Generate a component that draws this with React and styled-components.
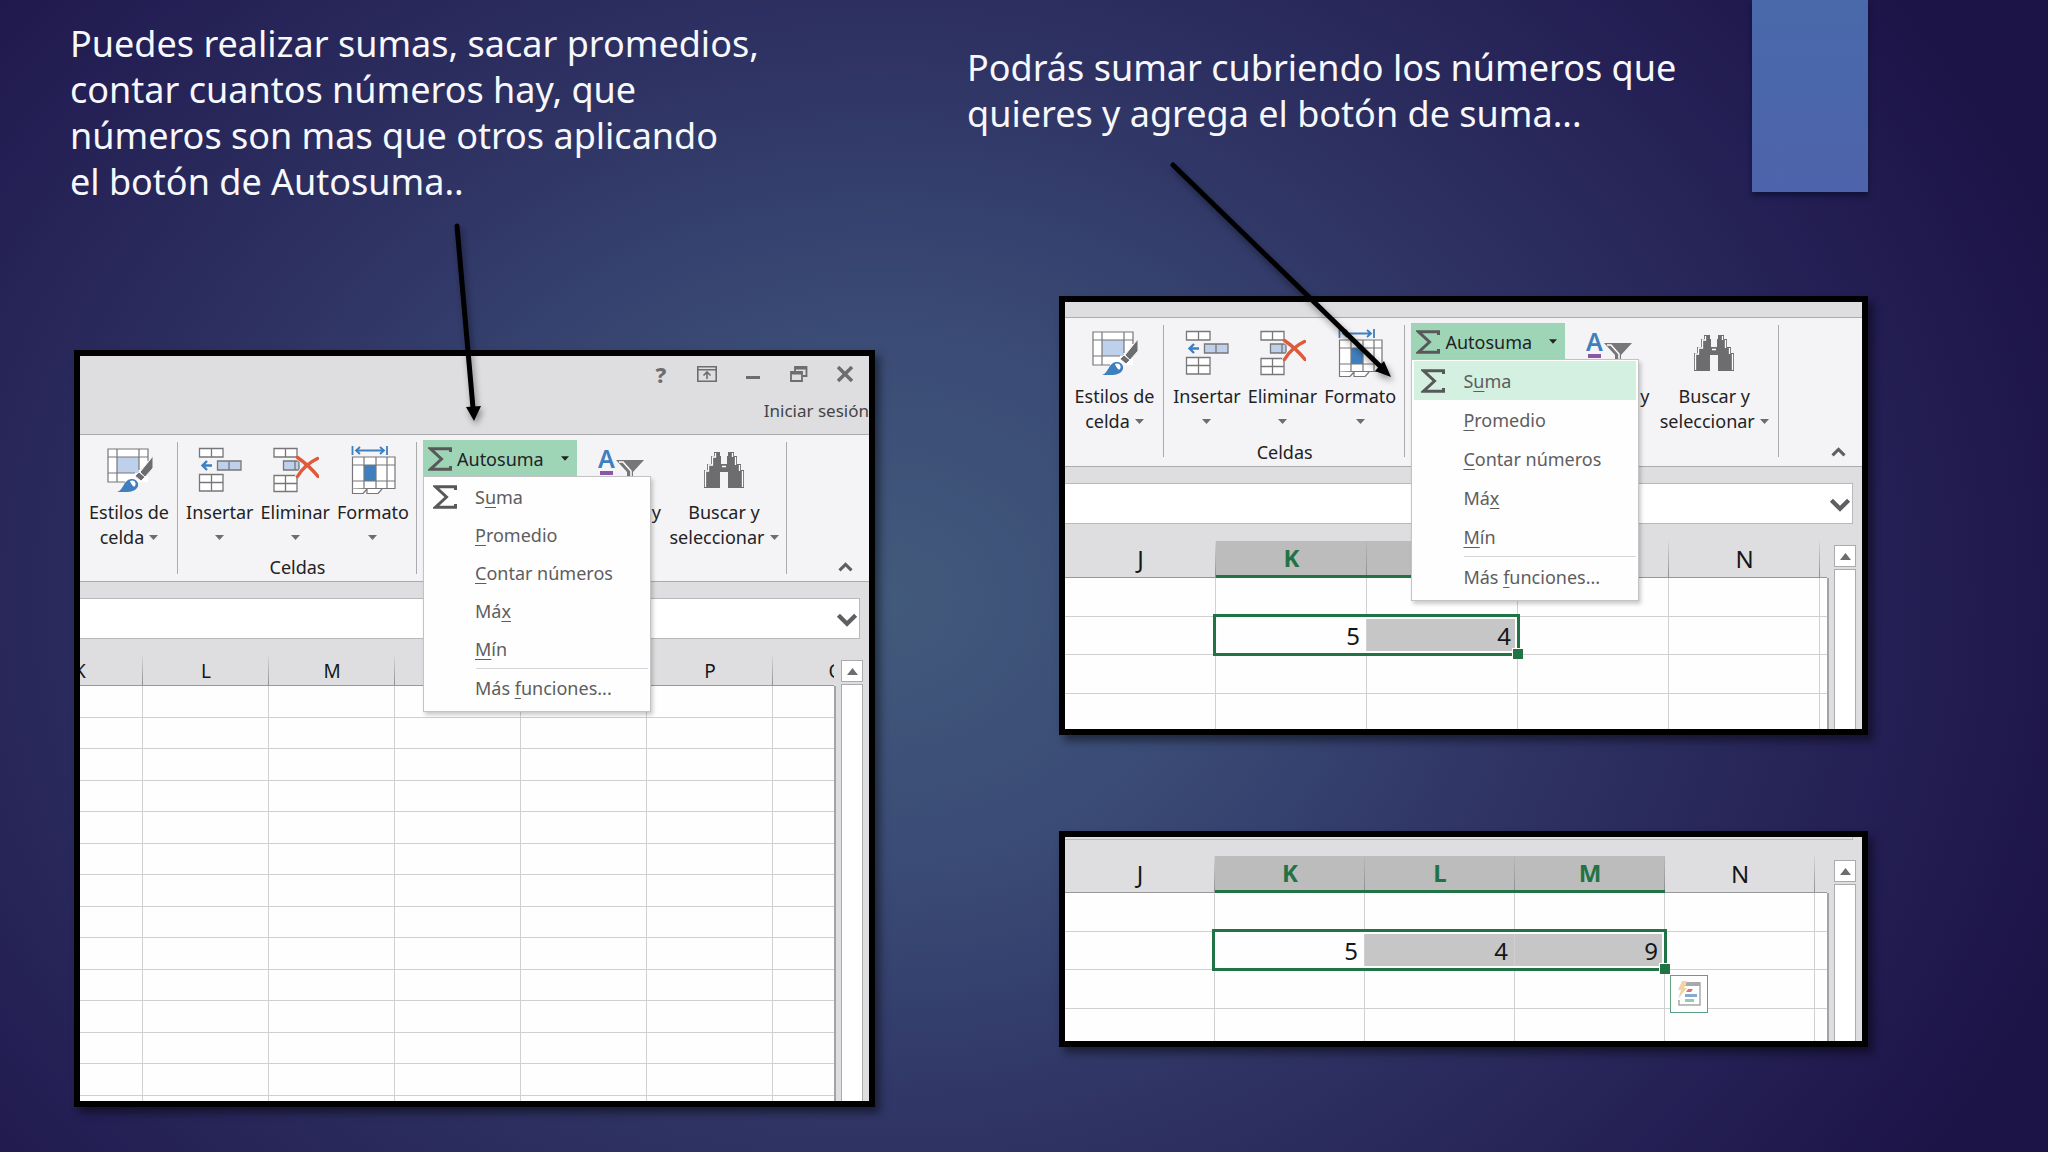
import React from 'react';
import styled, { createGlobalStyle, css } from 'styled-components';

const colors = {
  frame: '#000000',
  chrome: '#dedee0',
  ribbon: '#f4f4f6',
  line: '#ababad',
  gridLine: '#d0d0d3',
  icon: '#6d6d70',
  text: '#222224',
  menuText: '#5d5d60',
  green: '#217346',
  greenActive: '#9fd5b7',
  greenHover: '#d3f0e1',
  selected: '#bdbcbd',
  selectedCell: '#c6c6c6',
  blue: '#3f7fbf',
  paleBlue: '#bfd1ea',
};

const GlobalStyle = createGlobalStyle`
  * {
    box-sizing: border-box;
  }
  body {
    margin: 0;
    background: #1c1346;
    font-family: 'Noto Sans', 'Open Sans', sans-serif;
  }
  button, input {
    font: inherit;
    color: inherit;
    margin: 0;
    padding: 0;
    border: none;
    background: none;
  }
`;

/* ---------- icons ---------- */

function SigmaIcon() {
  return (
    <svg width="24" height="24" viewBox="0 0 24 24" aria-hidden="true">
      <path
        d="M22.500 5V1.800H2.500L13.500 12L2.500 22.200H22.500V19"
        fill="none"
        stroke="#58585a"
        strokeWidth="3"
      />
    </svg>
  );
}

function StylesIcon() {
  return (
    <svg width="48" height="48" viewBox="0 0 48 48" aria-hidden="true">
      <rect x="3" y="3" width="40" height="33" fill="#fff" />
      <rect x="12" y="11" width="22" height="16" fill={colors.paleBlue} />
      <path
        d="M43 15V3H3V36H20M12 3V36M34 3V24M3 11H43M3 27H30"
        fill="none"
        stroke="#77777a"
        strokeWidth="1.2"
      />
      <path d="M48 10V22L40 31L35 26Z" fill={colors.icon} stroke="#f4f4f6" />
      <path d="M34 26L40 31L36 35L30 30Z" fill={colors.icon} stroke="#f4f4f6" />
      <path
        d="M12 46C19 44 18 34 26 33C32 32 35 38 32 42C28 47 20 46 12 46Z"
        fill={colors.blue}
      />
      <path d="M25 35C29 33 32 37 30 40C29 42 26 38 25 35Z" fill="#fff" />
    </svg>
  );
}

function InsertIcon() {
  return (
    <svg width="48" height="48" viewBox="0 0 48 48" aria-hidden="true">
      <g fill="#fff" stroke="#77777a" strokeWidth="1.3">
        <path d="M3.500 2.500H27V11H3.500ZM15.500 2.500V11" />
        <path d="M3.500 28.500H27V45H3.500ZM15.500 28.500V45M3.500 36.500H27" />
        <path d="M21.500 15H45V24H21.500ZM33 15V24" fill={colors.paleBlue} />
      </g>
      <path
        d="M16 19.500H7M11 15L6.500 19.500L11 24"
        fill="none"
        stroke={colors.blue}
        strokeWidth="2.4"
      />
    </svg>
  );
}

function DeleteIcon() {
  return (
    <svg width="48" height="48" viewBox="0 0 48 48" aria-hidden="true">
      <g fill="#fff" stroke="#77777a" strokeWidth="1.3">
        <path d="M3 2.500H26V11H3ZM14.500 2.500V11" />
        <path d="M3 29.500H26V45.500H3ZM14.500 29.500V45.500M3 37.500H26" />
        <path d="M12.500 15H28V24H12.500ZM24 15V24" fill={colors.paleBlue} />
      </g>
      <path
        d="M26 11C33 16 41 23 47.500 31M47 12C39 16 31 23 26 31"
        fill="none"
        stroke="#f4f4f6"
        strokeWidth="5"
      />
      <path
        d="M26.500 11.500C33 16 41 23 47 30.500M46.500 12.500C39 16 31 23 26.500 30.500"
        fill="none"
        stroke="#dd5a3a"
        strokeWidth="3.400"
        strokeLinecap="round"
      />
    </svg>
  );
}

function FormatIcon() {
  return (
    <svg width="48" height="48" viewBox="0 0 48 48" aria-hidden="true">
      <path
        d="M3.500 0V9M38 0V9M7 4.500H35M11 1L7 4.500L11 8M31 1L35 4.500L31 8"
        fill="none"
        stroke={colors.blue}
        strokeWidth="1.8"
      />
      <rect x="3.500" y="11" width="42" height="31.500" fill="#fff" />
      <rect x="15" y="19" width="12" height="16" fill={colors.blue} />
      <path
        d="M3.500 11H46V42.500H3.500ZM15 11V42.500M27 11V42.500M38 11V42.500M3.500 19H46M3.500 35H46"
        fill="none"
        stroke="#77777a"
        strokeWidth="1.2"
      />
      <path
        d="M3.500 42.500V47.500H14L18 43M18 43V47.500H29L33 43"
        fill="#fff"
        stroke="#77777a"
        strokeWidth="1.2"
      />
    </svg>
  );
}

function BinocularsIcon() {
  return (
    <svg width="48" height="48" viewBox="0 0 48 48" aria-hidden="true">
      <g fill={colors.icon}>
        <path d="M14 6H20V10H21V18H27V10H28V6H34V10H37V18H41V24H44V42H28V26H20V42H4V24H7V18H11V10H14Z" />
      </g>
      <path
        d="M15.500 7V11H12.500V19H8.500V25H5.500V41M32.500 7V11M35.500 11V19M39.500 19V25M42.500 25V41M22 20.500H26"
        fill="none"
        stroke="#fff"
        strokeWidth="1.3"
      />
    </svg>
  );
}

function SortFilterIcon() {
  return (
    <svg width="48" height="48" viewBox="0 0 48 48" aria-hidden="true">
      <text x="0" y="22" fontSize="25" fontWeight="600" fill={colors.blue}>
        A
      </text>
      <rect x="2" y="25" width="13" height="4" fill="#8a56a8" />
      <path d="M18 14H46L35 26V38L29 34V26Z" fill="#77777a" />
      <path d="M21 16H25L33 25V34" fill="none" stroke="#fff" strokeWidth="1.5" />
    </svg>
  );
}

function CaretDown({ size = 9 }) {
  return (
    <svg width={size} height="5" viewBox="0 0 9 5" aria-hidden="true">
      <path d="M0 0H9L4.500 5Z" fill="currentColor" />
    </svg>
  );
}

function Chevron({ up, width, height, stroke }) {
  return (
    <svg width={width} height={height} viewBox="0 0 20 13" aria-hidden="true">
      <path
        d={up ? 'M2 11L10 3L18 11' : 'M2 2L10 10L18 2'}
        fill="none"
        stroke="#5f5f62"
        strokeWidth={stroke}
      />
    </svg>
  );
}

function RibbonOptionsIcon() {
  return (
    <svg width="20" height="16" viewBox="0 0 20 16" aria-hidden="true">
      <path
        d="M0.800 0.800H19.200V15.200H0.800ZM0.800 3.800H19.200M10 13V6M6.500 9.500L10 6L13.500 9.500"
        fill="none"
        stroke={colors.icon}
        strokeWidth="1.6"
      />
    </svg>
  );
}

function RestoreIcon() {
  return (
    <svg width="18" height="16" viewBox="0 0 18 16" aria-hidden="true">
      <path
        d="M1 6H12V15H1ZM1 7.500H12M5 5V1H16.500V10H13M5 2.500H16.500"
        fill="none"
        stroke={colors.icon}
        strokeWidth="1.800"
      />
    </svg>
  );
}

function QuickAnalysisIcon() {
  return (
    <svg width="24" height="26" viewBox="0 0 24 26" aria-hidden="true">
      <path d="M9 2H23V24H2V19" fill="#fff" stroke="#a7a9ab" strokeWidth="1.500" />
      <path d="M10 1H23V5H8Z" fill="#a7a9ab" />
      <path d="M5 0H10L7 7H10L1 18L4 9H1Z" fill="#f3d3a4" />
      <path d="M11 8H16L14 11H9Z" fill="#e2716d" />
      <rect x="8" y="13" width="12" height="3" fill="#86a9d3" />
      <rect x="8" y="18" width="9" height="3" fill="#93cbb9" />
    </svg>
  );
}

/* ---------- slide ---------- */

const Slide = styled.main`
  position: relative;
  display: grid;
  grid-template-columns: minmax(0, 805fr) minmax(0, 901fr);
  column-gap: 92px;
  align-items: start;
  min-height: 100vh;
  padding: 0 180px 44px 70px;
  overflow: hidden;
  background: radial-gradient(
    ellipse 62% 90% at 43% 52%,
    #425a7c 0%,
    #3a4b75 26%,
    #2e3263 54%,
    #241f54 80%,
    #1c1346 100%
  );
`;

const Caption = styled.p`
  margin: 0;
  padding-top: ${({ $top }) => $top}px;
  font-size: 36px;
  line-height: 46px;
  color: #f7f8fc;
  white-space: nowrap;
`;

const LeftColumn = styled.section`
  display: flex;
  flex-direction: column;
  gap: 145px;
  & > figure {
    margin-left: 4px;
  }
`;

const RightColumn = styled.section`
  display: flex;
  flex-direction: column;
  gap: 104px;
`;

const CaptionRow = styled.div`
  display: flex;
  justify-content: space-between;
  align-items: flex-start;
`;

const Band = styled.div`
  width: 116px;
  height: 192px;
  background: linear-gradient(#4869aa, #4e63ab);
  box-shadow: 0 4px 5px rgba(5, 12, 40, 0.6);
`;

const FrameStack = styled.div`
  display: flex;
  flex-direction: column;
  gap: 96px;
  margin-left: 92px;
`;

const Frame = styled.figure`
  display: flex;
  flex-direction: column;
  margin: 0;
  border: 6px solid ${colors.frame};
  background: ${colors.chrome};
  box-shadow: 5px 6px 8px rgba(0, 0, 0, 0.45);
  color: ${colors.text};
`;

const Arrows = styled.svg`
  position: absolute;
  top: 0;
  left: 0;
  width: 100%;
  height: 1152px;
  pointer-events: none;
  filter: drop-shadow(2px 4px 3px rgba(0, 0, 0, 0.4));
`;

/* ---------- window chrome ---------- */

const TitleBar = styled.header`
  display: flex;
  flex-direction: column;
  align-items: flex-end;
  height: ${({ $height }) => $height}px;
  border-bottom: 1px solid ${colors.line};
`;

const WindowButtons = styled.div`
  display: flex;
  padding-right: 1px;
`;

const WindowButton = styled.button`
  display: flex;
  align-items: center;
  justify-content: center;
  width: 46px;
  height: 36px;
  font-size: 22px;
  line-height: 36px;
  font-weight: 800;
  color: ${colors.icon};
`;

const SignIn = styled.a`
  margin-top: 6px;
  font-size: 17px;
  line-height: 26px;
  color: #444446;
  text-decoration: none;
  white-space: nowrap;
`;

const RibbonBar = styled.div`
  display: grid;
  grid-template-columns: 98fr 239fr 370fr 82fr;
  height: ${({ $roomy }) => ($roomy ? 149 : 147)}px;
  border-bottom: 1px solid ${colors.line};
  background: ${colors.ribbon};
  font-size: 18px;
`;

const Group = styled.div`
  display: flex;
  flex-direction: column;
  min-width: 0;
  padding-top: 11px;
  background: linear-gradient(${colors.line}, ${colors.line}) right 7px / 1px
    132px no-repeat;
`;

const Tools = styled.div`
  display: flex;
  justify-content: center;
  gap: 7px;
  flex: 1;
`;

const Tool = styled.button`
  display: flex;
  flex-direction: column;
  align-items: center;
  align-self: flex-start;
  gap: ${({ $roomy }) => ($roomy ? 7 : 6)}px;
  line-height: 25px;
  white-space: nowrap;
`;

const ToolLabel = styled.span`
  display: flex;
  flex-direction: column;
  align-items: center;
  svg {
    color: ${colors.icon};
  }
`;

const LabelLine = styled.span`
  display: flex;
  align-items: center;
  justify-content: center;
  gap: 5px;
  height: 25px;
`;

const GroupName = styled.div`
  padding-bottom: 4px;
  line-height: 20px;
  text-align: center;
`;

const EditingGroup = styled(Group)`
  flex-direction: row;
  padding: 5px 0 0 6px;
`;

const MenuAnchor = styled.div`
  position: relative;
  flex: none;
  width: 154px;
`;

const AutosumButton = styled.button`
  display: flex;
  align-items: center;
  gap: 5px;
  width: 100%;
  height: 37px;
  padding: 0 8px 0 5px;
  background: ${colors.greenActive};
  .caret {
    display: flex;
    margin-left: auto;
  }
`;

const Menu = styled.ul`
  position: absolute;
  top: 36px;
  left: 0;
  z-index: 1;
  width: 228px;
  margin: 0;
  padding: 1px 2px 4px;
  border: 1px solid #c3c3c5;
  background: #fefefe;
  box-shadow: 2px 3px 4px rgba(0, 0, 0, 0.2);
  list-style: none;
`;

const MenuItem = styled.button`
  display: grid;
  grid-template-columns: 24px 1fr;
  column-gap: 18px;
  align-items: center;
  width: 100%;
  height: ${({ $roomy }) => ($roomy ? 39 : 38)}px;
  padding-left: 7px;
  text-align: left;
  color: ${colors.menuText};
  white-space: nowrap;
  svg {
    display: block;
  }
  ${({ $active }) =>
    $active &&
    css`
      background: ${colors.greenHover};
    `}
  u {
    text-underline-offset: 3px;
  }
`;

const MenuDivider = styled.li`
  height: 1px;
  margin-left: 50px;
  background: #d5d5d7;
`;

const SortTool = styled(Tool)`
  align-items: flex-end;
  width: 84px;
  padding-top: 6px;
  flex: none;
  svg {
    margin-right: 15px;
  }
`;

const FindTool = styled(Tool)`
  flex: 1;
  padding-top: 6px;
`;

const CollapseButton = styled.button`
  align-self: flex-end;
  justify-self: end;
  padding: 0 16px 4px 0;
`;

const FormulaRow = styled.div`
  display: flex;
  height: 41px;
  margin: 16px 9px 17px 0;
  border: 1px solid #b9b9bb;
  border-left: none;
  background: #ffffff;
  input {
    flex: 1;
    min-width: 0;
    padding-left: 8px;
    outline: none;
  }
  button {
    padding: 5px 1px 0 0;
  }
`;

const FormulaEdge = styled.div`
  height: 3px;
  margin: 0 9px 16px 0;
  border-right: 1px solid #b9b9bb;
  border-bottom: 1px solid #b9b9bb;
`;

/* ---------- sheet ---------- */

const Sheet = styled.div`
  display: flex;
  height: ${({ $height }) => $height}px;
  overflow: hidden;
`;

const Viewport = styled.div`
  flex: 1;
  min-width: 0;
  overflow: hidden;
`;

const Grid = styled.table`
  width: max-content;
  margin-left: ${({ $scroll }) => -$scroll}px;
  table-layout: fixed;
  border-collapse: separate;
  border-spacing: 0;
  font-size: ${({ $fontSize }) => $fontSize}px;
  color: #161618;
`;

const HeadCell = styled.th`
  width: ${({ $width }) => $width}px;
  height: ${({ $height }) => $height}px;
  padding: 0;
  border-bottom: 1px solid #98989a;
  background: linear-gradient(rgba(150, 150, 152, 0.1), #8f8f92) right / 1px
    100% no-repeat;
  font-weight: 400;
  line-height: 24px;
  ${({ $selected }) =>
    $selected &&
    css`
      border-bottom: 3px solid ${colors.green};
      background-color: ${colors.selected};
      color: ${colors.green};
      font-weight: 700;
    `}
`;

const Cell = styled.td`
  position: relative;
  height: ${({ $height }) => $height}px;
  padding: 0 6px 0 0;
  border-right: 1px solid ${colors.gridLine};
  border-bottom: 1px solid ${colors.gridLine};
  background: ${({ $selected }) => ($selected ? colors.selectedCell : '#fefefe')};
  line-height: 24px;
  text-align: right;
`;

const Selection = styled.span`
  position: absolute;
  top: -3px;
  left: -3px;
  z-index: 1;
  width: ${({ $width }) => $width}px;
  height: 42px;
  border: 3px solid ${colors.green};
  box-shadow: inset 0 0 0 2px #fff;
  &::after {
    content: '';
    position: absolute;
    right: -6px;
    bottom: -6px;
    width: 10px;
    height: 10px;
    border: solid #fff;
    border-width: 1px 0 0 1px;
    background: ${colors.green};
  }
`;

const QuickAnalysis = styled.button`
  position: absolute;
  top: 43px;
  left: calc(100% + 6px);
  display: flex;
  align-items: center;
  justify-content: center;
  width: 38px;
  height: 38px;
  border: 1px solid #5da283;
  background: #fff;
`;

const SheetEdge = styled.div`
  width: 2px;
  margin-top: ${({ $top }) => $top}px;
  background: #a3a3a5;
`;

const ScrollColumn = styled.div`
  display: flex;
  flex-direction: column;
  gap: 2px;
  width: 33px;
  padding: 4px 6px 0 5px;
`;

const ScrollButton = styled.button`
  display: flex;
  align-items: center;
  justify-content: center;
  flex: none;
  height: 22px;
  border: 1px solid ${colors.line};
  background: #fff;
`;

const ScrollThumb = styled.div`
  flex: 1;
  border: 1px solid ${colors.line};
  border-bottom: none;
  background: #fff;
`;

function SheetGrid({
  columns,
  rows,
  columnWidth,
  rowHeight,
  headHeight,
  height,
  fontSize = 24,
  scroll = 0,
  values = [],
  valueColumn = 1,
  quickAnalysis,
}) {
  const isSelected = i => i >= valueColumn && i < valueColumn + values.length;
  return (
    <Sheet $height={height}>
      <Viewport>
        <Grid $scroll={scroll} $fontSize={fontSize}>
          <thead>
            <tr>
              {columns.map((name, i) => (
                <HeadCell
                  key={i}
                  scope="col"
                  $width={columnWidth}
                  $height={headHeight}
                  $selected={isSelected(i)}
                >
                  {name}
                </HeadCell>
              ))}
            </tr>
          </thead>
          <tbody>
            {Array.from({ length: rows }, (_, r) => (
              <tr key={r}>
                {columns.map((_name, i) => {
                  const filled = r === 1 && isSelected(i);
                  return (
                    <Cell
                      key={i}
                      $height={r % 2 ? rowHeight - 1 : rowHeight}
                      $selected={filled && i > valueColumn}
                    >
                      {filled && values[i - valueColumn]}
                      {filled && i === valueColumn && (
                        <Selection $width={values.length * columnWidth + 5}>
                          {quickAnalysis && (
                            <QuickAnalysis aria-label="Análisis rápido">
                              <QuickAnalysisIcon />
                            </QuickAnalysis>
                          )}
                        </Selection>
                      )}
                    </Cell>
                  );
                })}
              </tr>
            ))}
          </tbody>
        </Grid>
      </Viewport>
      <SheetEdge $top={headHeight} />
      <ScrollColumn>
        <ScrollButton aria-label="Desplazar hacia arriba">
          <svg width="11" height="7" viewBox="0 0 11 7" aria-hidden="true">
            <path d="M0 7L5.500 0L11 7Z" fill={colors.icon} />
          </svg>
        </ScrollButton>
        <ScrollThumb />
      </ScrollColumn>
    </Sheet>
  );
}

const menuItems = [
  <>S<u>u</u>ma</>,
  <><u>P</u>romedio</>,
  <><u>C</u>ontar números</>,
  <>Má<u>x</u></>,
  <><u>M</u>ín</>,
];

const cellTools = [
  { label: 'Insertar', icon: <InsertIcon /> },
  { label: 'Eliminar', icon: <DeleteIcon /> },
  { label: 'Formato', icon: <FormatIcon /> },
];

function AutosumMenu({ roomy, highlight }) {
  return (
    <Menu>
      {menuItems.map((item, i) => (
        <li key={i}>
          <MenuItem $roomy={roomy} $active={highlight && i === 0}>
            {i === 0 ? <SigmaIcon /> : <span />}
            <span>{item}</span>
          </MenuItem>
        </li>
      ))}
      <MenuDivider />
      <li>
        <MenuItem $roomy={roomy}>
          <span />
          <span>Más <u>f</u>unciones...</span>
        </MenuItem>
      </li>
    </Menu>
  );
}

function Ribbon({ roomy, highlight }) {
  return (
    <RibbonBar $roomy={roomy}>
      <Group>
        <Tools>
          <Tool $roomy={roomy}>
            <StylesIcon />
            <ToolLabel>
              <LabelLine>Estilos de</LabelLine>
              <LabelLine>
                celda <CaretDown />
              </LabelLine>
            </ToolLabel>
          </Tool>
        </Tools>
      </Group>
      <Group>
        <Tools>
          {cellTools.map(({ label, icon }) => (
            <Tool key={label} $roomy={roomy}>
              {icon}
              <ToolLabel>
                <LabelLine>{label}</LabelLine>
                <LabelLine>
                  <CaretDown />
                </LabelLine>
              </ToolLabel>
            </Tool>
          ))}
        </Tools>
        <GroupName>Celdas</GroupName>
      </Group>
      <EditingGroup>
        <MenuAnchor>
          <AutosumButton aria-expanded="true">
            <SigmaIcon />
            Autosuma
            <span className="caret">
              <CaretDown size={8} />
            </span>
          </AutosumButton>
          <AutosumMenu roomy={roomy} highlight={highlight} />
        </MenuAnchor>
        <SortTool $roomy={roomy} aria-label="Ordenar y filtrar">
          <SortFilterIcon />
          <LabelLine>y</LabelLine>
        </SortTool>
        <FindTool $roomy={roomy}>
          <BinocularsIcon />
          <ToolLabel>
            <LabelLine>Buscar y</LabelLine>
            <LabelLine>
              seleccionar <CaretDown />
            </LabelLine>
          </ToolLabel>
        </FindTool>
      </EditingGroup>
      <CollapseButton aria-label="Contraer la cinta de opciones">
        <Chevron up width={15} height={10} stroke={4} />
      </CollapseButton>
    </RibbonBar>
  );
}

function FormulaBar() {
  return (
    <FormulaRow>
      <input type="text" aria-label="Barra de fórmulas" />
      <button aria-label="Expandir barra de fórmulas">
        <Chevron width={22} height={14} stroke={4} />
      </button>
    </FormulaRow>
  );
}

function App() {
  return (
    <>
      <GlobalStyle />
      <Slide>
        <LeftColumn>
          <Caption $top={21}>
            Puedes realizar sumas, sacar promedios,
            <br />
            contar cuantos números hay, que
            <br />
            números son mas que otros aplicando
            <br />
            el botón de Autosuma..
          </Caption>
          <Frame>
            <TitleBar $height={79}>
              <WindowButtons>
                <WindowButton aria-label="Ayuda">?</WindowButton>
                <WindowButton aria-label="Opciones de presentación">
                  <RibbonOptionsIcon />
                </WindowButton>
                <WindowButton aria-label="Minimizar">
                  <svg width="14" height="16" viewBox="0 0 14 16">
                    <path d="M0 11.500H14" stroke={colors.icon} strokeWidth="3" />
                  </svg>
                </WindowButton>
                <WindowButton aria-label="Restaurar">
                  <RestoreIcon />
                </WindowButton>
                <WindowButton aria-label="Cerrar">
                  <svg width="16" height="16" viewBox="0 0 16 16">
                    <path
                      d="M1 1L15 15M15 1L1 15"
                      stroke={colors.icon}
                      strokeWidth="3.500"
                    />
                  </svg>
                </WindowButton>
              </WindowButtons>
              <SignIn href="#">Iniciar sesión</SignIn>
            </TitleBar>
            <Ribbon />
            <FormulaBar />
            <SheetGrid
              columns={['K', 'L', 'M', 'N', 'O', 'P', 'Q']}
              rows={14}
              columnWidth={126}
              rowHeight={32}
              headHeight={30}
              height={445}
              fontSize={19}
              scroll={63}
            />
          </Frame>
        </LeftColumn>

        <RightColumn>
          <CaptionRow>
            <Caption $top={45}>
              Podrás sumar cubriendo los números que
              <br />
              quieres y agrega el botón de suma...
            </Caption>
            <Band />
          </CaptionRow>
          <FrameStack>
            <Frame>
              <TitleBar $height={16} />
              <Ribbon roomy highlight />
              <FormulaBar />
              <SheetGrid
                columns={['J', 'K', 'L', 'M', 'N', '']}
                rows={4}
                columnWidth={151}
                rowHeight={39}
                headHeight={37}
                height={188}
                values={[5, 4]}
              />
            </Frame>
            <Frame>
              <FormulaEdge />
              <SheetGrid
                columns={['J', 'K', 'L', 'M', 'N', '']}
                rows={4}
                columnWidth={150}
                rowHeight={39}
                headHeight={37}
                height={185}
                values={[5, 4, 9]}
                quickAnalysis
              />
            </Frame>
          </FrameStack>
        </RightColumn>

        <Arrows viewBox="0 0 2048 1152" preserveAspectRatio="none">
          <g stroke="#000" strokeWidth="5" strokeLinecap="round">
            <path d="M457 226L473 408" />
            <path d="M1173 165L1382 368" />
          </g>
          <path d="M466 407L481 406L474 421Z" />
          <path d="M1375 371L1384 361L1391 377Z" />
        </Arrows>
      </Slide>
    </>
  );
}

export default App;
